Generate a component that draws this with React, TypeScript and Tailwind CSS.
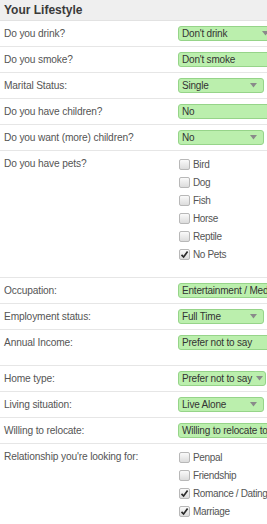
import React from 'react';

type Field =
  | { kind: 'select'; label: string; value: string; width: string; arrow: boolean; tall?: boolean }
  | { kind: 'checks'; label: string; options: { name: string; checked: boolean }[]; bottom: string };

const fields: Field[] = [
  { kind: 'select', label: 'Do you drink?', value: "Don't drink", width: 'w-[98px]', arrow: true },
  { kind: 'select', label: 'Do you smoke?', value: "Don't smoke", width: 'w-[120px]', arrow: false },
  { kind: 'select', label: 'Marital Status:', value: 'Single', width: 'w-[86px]', arrow: true },
  { kind: 'select', label: 'Do you have children?', value: 'No', width: 'w-[120px]', arrow: false },
  { kind: 'select', label: 'Do you want (more) children?', value: 'No', width: 'w-[86px]', arrow: true },
  {
    kind: 'checks',
    label: 'Do you have pets?',
    bottom: 'pb-[14px]',
    options: [
      { name: 'Bird', checked: false },
      { name: 'Dog', checked: false },
      { name: 'Fish', checked: false },
      { name: 'Horse', checked: false },
      { name: 'Reptile', checked: false },
      { name: 'No Pets', checked: true },
    ],
  },
  { kind: 'select', label: 'Occupation:', value: 'Entertainment / Media', width: 'w-[130px]', arrow: false },
  { kind: 'select', label: 'Employment status:', value: 'Full Time', width: 'w-[86px]', arrow: true },
  { kind: 'select', label: 'Annual Income:', value: 'Prefer not to say', width: 'w-[120px]', arrow: false, tall: true },
  { kind: 'select', label: 'Home type:', value: 'Prefer not to say', width: 'w-[88px]', arrow: true },
  { kind: 'select', label: 'Living situation:', value: 'Live Alone', width: 'w-[86px]', arrow: true },
  { kind: 'select', label: 'Willing to relocate:', value: 'Willing to relocate to a new city', width: 'w-[150px]', arrow: false },
  {
    kind: 'checks',
    label: "Relationship you're looking for:",
    bottom: 'pb-[10px]',
    options: [
      { name: 'Penpal', checked: false },
      { name: 'Friendship', checked: false },
      { name: 'Romance / Dating', checked: true },
      { name: 'Marriage', checked: true },
    ],
  },
];

function CheckBox({ checked }: { checked: boolean }) {
  return (
    <span className="w-[11px] h-[11px] rounded-[2px] border border-[#b8b8b8] bg-gradient-to-b from-[#fafafa] to-[#dcdcdc] flex items-center justify-center shrink-0">
      {checked && (
        <svg width="9" height="9" viewBox="0 0 9 9">
          <path d="M1.5 4.8 L3.6 7 L7.6 1.6" fill="none" stroke="#2b2b2b" strokeWidth="1.7" />
        </svg>
      )}
    </span>
  );
}

function GreenSelect({ value, width, arrow }: { value: string; width: string; arrow: boolean }) {
  return (
    <div
      className={`${width} h-[15px] shrink-0 rounded-[3px] border border-[#96d489] bg-[#bbefad] flex items-center justify-between pl-[3px] pr-[6px] text-[10px] tracking-[-0.2px] text-[#333] whitespace-nowrap overflow-hidden`}
    >
      <span>{value}</span>
      {arrow && (
        <svg width="7" height="5" viewBox="0 0 7 5" className="shrink-0 ml-1">
          <path d="M0 0 H7 L3.5 4.5 Z" fill="#8a8a8a" />
        </svg>
      )}
    </div>
  );
}

export default function App() {
  return (
    <div className="w-[267px] min-h-[524px] overflow-hidden bg-white font-['Liberation_Sans',Arial,sans-serif]">
      <div className="h-[21px] bg-[#efefef] border-b border-[#e2e2e2] flex items-center pl-[4px]">
        <h2 className="text-[12px] font-bold text-[#3a3a3a]">Your Lifestyle</h2>
      </div>

      {fields.map((f) =>
        f.kind === 'select' ? (
          <div key={f.label} className={`border-b border-[#e6e6e6] ${f.tall ? 'pb-[10px]' : ''}`}>
            <div className="h-[25px] flex items-center">
              <span className="w-[178px] shrink-0 pl-[4px] text-[10.2px] tracking-[-0.15px] text-[#555]">{f.label}</span>
              <GreenSelect value={f.value} width={f.width} arrow={f.arrow} />
            </div>
          </div>
        ) : (
          <div key={f.label} className={`flex pt-[4px] ${f.bottom} border-b border-[#e6e6e6]`}>
            <div className="w-[179px] shrink-0 pl-[4px] h-[18px] flex items-center text-[10.2px] tracking-[-0.15px] text-[#555]">
              {f.label}
            </div>
            <div className="flex flex-col">
              {f.options.map((o) => (
                <label key={o.name} className="h-[18px] flex items-center gap-[3px] text-[10px] tracking-[-0.35px] text-[#555] whitespace-nowrap">
                  <CheckBox checked={o.checked} />
                  {o.name}
                </label>
              ))}
            </div>
          </div>
        )
      )}
    </div>
  );
}
